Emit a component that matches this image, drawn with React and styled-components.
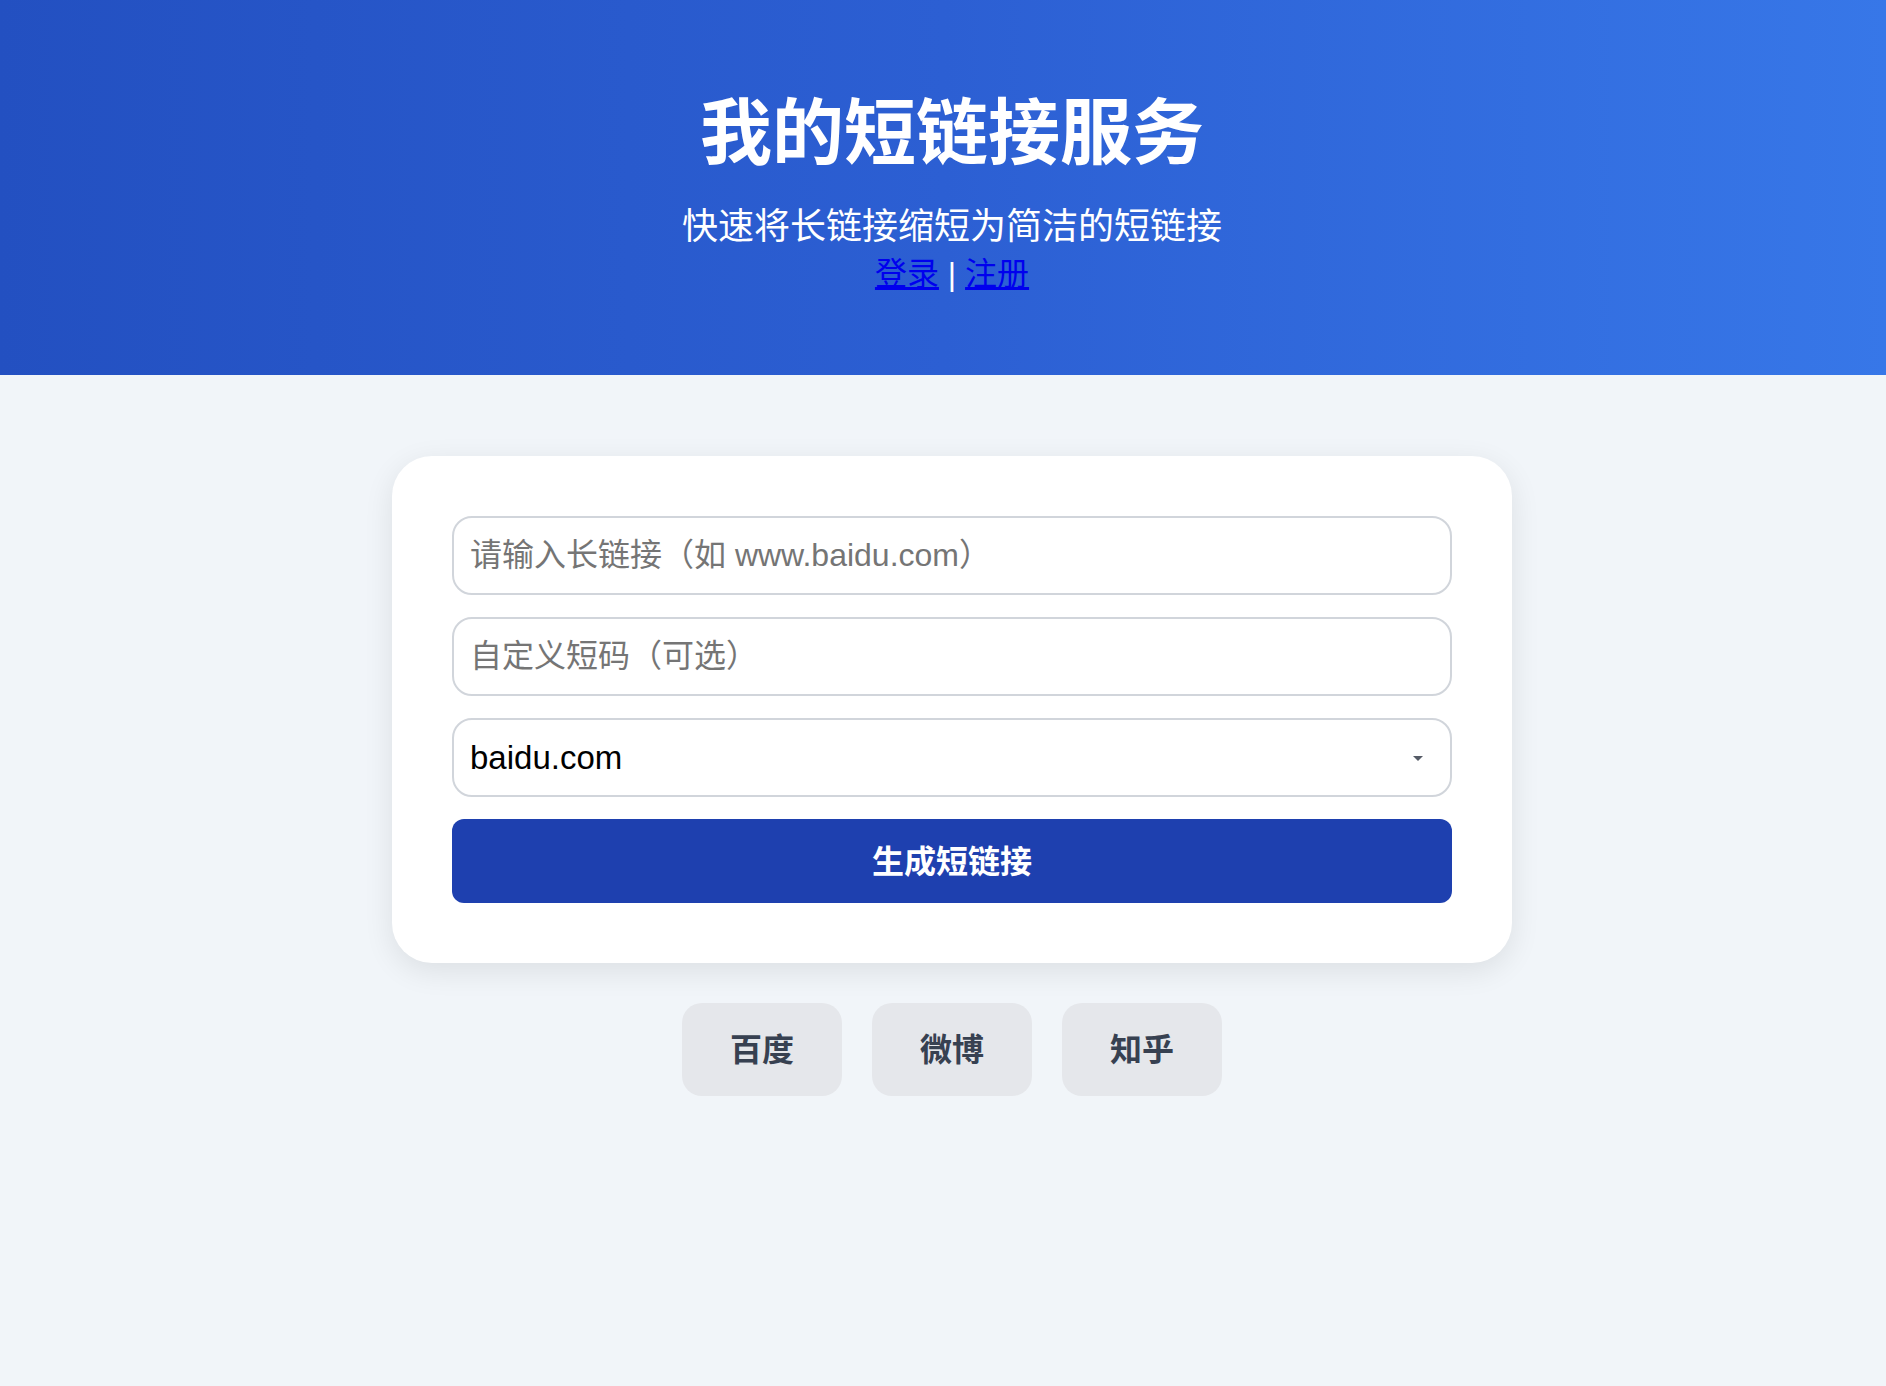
import React, { useState } from "react"
import styled, { createGlobalStyle } from "styled-components"

const GlobalStyle = createGlobalStyle`
  html, body {
    margin: 0;
    padding: 0;
    background: #f1f5f9;
    font-family: "Liberation Sans", "Noto Sans CJK SC", sans-serif;
  }
  * {
    box-sizing: border-box;
  }
`

const Page = styled.div`
  min-height: 100vh;
  background: #f1f5f9;
`

const Header = styled.header`
  background: linear-gradient(90deg, #2350c1 0%, #2c5fd3 50%, #3777e8 100%);
  color: #fff;
  text-align: center;
  padding: 84px 0 77px 18px;
`

const Title = styled.h1`
  margin: 0 0 30px;
  font-family: "Noto Sans CJK SC", sans-serif;
  font-size: 72px;
  font-weight: 700;
  line-height: 1.2;
`

const Subtitle = styled.p`
  margin: 0;
  font-family: "Noto Sans CJK SC", sans-serif;
  font-size: 36px;
  line-height: 46px;
`

const AuthLinks = styled.div`
  margin-top: 4px;
  font-size: 32px;
  line-height: 48px;

  a {
    color: #0000ee;
    text-decoration: underline;
  }
`

const Main = styled.main`
  padding-left: 18px;
`

const Card = styled.form`
  width: 1120px;
  margin: 81px auto 0;
  padding: 60px;
  background: #fff;
  border-radius: 40px;
  box-shadow: 0 8px 30px rgba(0, 0, 0, 0.09);
  display: flex;
  flex-direction: column;
  gap: 22px;
`

const Field = styled.input`
  width: 100%;
  height: 79px;
  padding: 0 16px;
  border: 2px solid #d1d5db;
  border-radius: 20px;
  font-family: inherit;
  font-size: 32px;
  color: #000;
  background: #fff;
  outline: none;

  &::placeholder {
    color: #757575;
  }
`

const SelectWrap = styled.div`
  position: relative;
`

const Select = styled.select`
  width: 100%;
  height: 79px;
  padding: 0 16px;
  border: 2px solid #d1d5db;
  border-radius: 20px;
  font-family: inherit;
  font-size: 33px;
  color: #000;
  background: #fff;
  appearance: none;
  outline: none;
`

const Caret = styled.svg`
  position: absolute;
  right: 29px;
  top: 38px;
  pointer-events: none;
`

const Submit = styled.button`
  height: 84px;
  padding: 0 0 4px;
  border: none;
  border-radius: 12px;
  background: #1e40af;
  color: #fff;
  font-family: "Noto Sans CJK SC", sans-serif;
  font-size: 32px;
  font-weight: 700;
  cursor: pointer;
`

const Shortcuts = styled.div`
  display: flex;
  justify-content: center;
  gap: 30px;
  margin-top: 40px;
`

const Shortcut = styled.button`
  padding: 0 48px 6px;
  height: 93px;
  border: none;
  border-radius: 20px;
  background: #e5e7eb;
  color: #374151;
  font-family: "Noto Sans CJK SC", sans-serif;
  font-size: 32px;
  font-weight: 700;
  cursor: pointer;
`

const shortcuts = [
  { label: "百度", url: "https://www.baidu.com" },
  { label: "微博", url: "https://weibo.com" },
  { label: "知乎", url: "https://www.zhihu.com" },
]

export default function App() {
  const [url, setUrl] = useState("")
  const [code, setCode] = useState("")
  const [domain, setDomain] = useState("baidu.com")

  return (
    <Page>
      <GlobalStyle />
      <Header>
        <Title>我的短链接服务</Title>
        <Subtitle>快速将长链接缩短为简洁的短链接</Subtitle>
        <AuthLinks>
          <a href="#login">登录</a> | <a href="#register">注册</a>
        </AuthLinks>
      </Header>

      <Main>
        <Card onSubmit={e => e.preventDefault()}>
          <Field
            placeholder="请输入长链接（如 www.baidu.com）"
            value={url}
            onChange={e => setUrl(e.target.value)}
          />
          <Field
            placeholder="自定义短码（可选）"
            value={code}
            onChange={e => setCode(e.target.value)}
          />
          <SelectWrap>
            <Select value={domain} onChange={e => setDomain(e.target.value)}>
              <option value="baidu.com">baidu.com</option>
            </Select>
            <Caret width="10" height="5" viewBox="0 0 10 5">
              <path d="M0 0 L10 0 L5 5 Z" fill="#555b66" />
            </Caret>
          </SelectWrap>
          <Submit type="submit">生成短链接</Submit>
        </Card>

        <Shortcuts>
          {shortcuts.map(s => (
            <Shortcut key={s.label} type="button" onClick={() => setUrl(s.url)}>
              {s.label}
            </Shortcut>
          ))}
        </Shortcuts>
      </Main>
    </Page>
  )
}
